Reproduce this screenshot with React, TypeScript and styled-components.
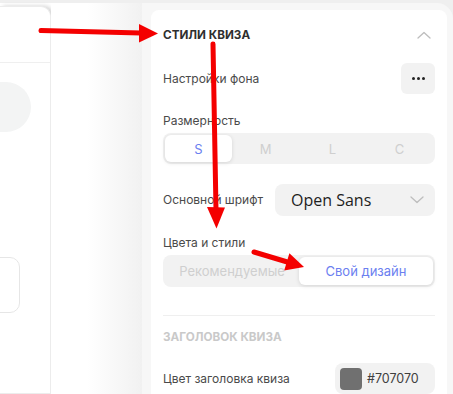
import styled, { createGlobalStyle } from 'styled-components';

const GlobalStyle = createGlobalStyle`
  html, body {
    margin: 0;
    padding: 0;
    background: #efefef;
    overflow: hidden;
  }
  body {
    font-family: 'Inter', 'Noto Sans', sans-serif;
    -webkit-font-smoothing: antialiased;
  }
  * { box-sizing: border-box; }
`;

const COLORS = {
  label: '#4a4a4a',
  heading: '#2f2f2f',
  muted: '#c9c9c9',
  field: '#f2f2f2',
  accent: '#6b80f0',
  panel: '#f7f7f7',
};

const Page = styled.div`
  position: relative;
  width: 453px;
  height: 394px;
  padding-top: 3px;
  display: flex;
  flex-direction: column;
`;

const Workspace = styled.div`
  flex: 1;
  display: flex;
  min-height: 0;
`;

const PreviewColumn = styled.div`
  width: 51px;
  background: #fff;
  padding-top: 3px;
  display: flex;
`;

const PreviewCard = styled.div`
  flex: 1;
  background: #fff;
  border: 1px solid #ececec;
  border-left: none;
  border-top-right-radius: 10px;
  box-shadow: 3px 0 4px rgba(0, 0, 0, 0.18);
  overflow: hidden;
  display: flex;
  flex-direction: column;
`;

const PreviewHeader = styled.div`
  height: 56px;
  border-bottom: 1px solid #efefef;
  flex-shrink: 0;
`;

const Avatar = styled.div`
  width: 60px;
  height: 50px;
  margin: 19px 0 0 -29px;
  border-radius: 25px;
  background: #f3f4f4;
`;

const GhostBox = styled.div`
  width: 40px;
  height: 56px;
  margin: 125px 0 0 -20px;
  border: 1px solid #e6e6e6;
  border-radius: 10px;
`;

const Gutter = styled.div`
  flex: 1;
  background: linear-gradient(to right, #fff 0%, #fff 40%, #f1f1f1 100%);
`;

const SettingsPanel = styled.div`
  width: 311px;
  background: ${COLORS.panel};
  border-top-right-radius: 16px;
  padding: 7px 6px 0 9px;
  display: flex;
`;

const SettingsCard = styled.div`
  flex: 1;
  background: #fff;
  border-radius: 8px 8px 0 0;
  padding: 0 12px;
  display: flex;
  flex-direction: column;
`;

const SectionHeader = styled.div`
  height: 48px;
  display: flex;
  align-items: center;
  justify-content: space-between;
  padding: 1px 4px 0 0;
`;

const SectionTitle = styled.div<{ muted?: boolean }>`
  font-size: 11.7px;
  font-weight: 700;
  color: ${({ muted }) => (muted ? COLORS.muted : COLORS.heading)};
`;

const Row = styled.div<{ top: number }>`
  margin-top: ${({ top }) => top}px;
  display: flex;
  align-items: center;
  justify-content: space-between;
`;

const Label = styled.div<{ top?: number }>`
  margin-top: ${({ top }) => top ?? 0}px;
  font-size: 12px;
  line-height: 16px;
  color: ${COLORS.label};
`;

const IconButton = styled.div`
  width: 34px;
  height: 31px;
  border-radius: 6px;
  background: ${COLORS.field};
  display: flex;
  align-items: center;
  justify-content: center;
  gap: 2px;
`;

const Dot = styled.span`
  width: 3px;
  height: 3px;
  border-radius: 50%;
  background: #222;
`;

const Segmented = styled.div<{ top: number; height: number }>`
  margin-top: ${({ top }) => top}px;
  height: ${({ height }) => height}px;
  padding: 2px;
  border-radius: 8px;
  background: ${COLORS.field};
  display: flex;
`;

const Segment = styled.div<{ active?: boolean; size: number }>`
  flex: 1;
  display: flex;
  align-items: center;
  justify-content: center;
  border-radius: 6px;
  font-size: ${({ size }) => size}px;
  color: ${({ active }) => (active ? COLORS.accent : '#cfcfcf')};
  background: ${({ active }) => (active ? '#fff' : 'transparent')};
  box-shadow: ${({ active }) => (active ? '0 1px 4px rgba(0,0,0,0.12)' : 'none')};
`;

const Select = styled.div`
  width: 160px;
  height: 32px;
  border-radius: 8px;
  background: ${COLORS.field};
  padding: 0 11px 0 16px;
  display: flex;
  align-items: center;
  justify-content: space-between;
  font-family: 'Open Sans', sans-serif;
  font-size: 16px;
  color: #1e1e1e;
`;

const Divider = styled.div`
  margin-top: 28px;
  height: 1px;
  background: #efefef;
`;

const SubHeader = styled.div`
  margin-top: 13px;
  height: 16px;
  display: flex;
  align-items: center;
`;

const ColorChip = styled.div`
  width: 100px;
  height: 31px;
  border-radius: 8px;
  background: ${COLORS.field};
  padding: 0 5px;
  display: flex;
  align-items: center;
  gap: 5px;
  font-size: 12.5px;
  color: #404040;
`;

const Swatch = styled.div<{ color: string }>`
  width: 22px;
  height: 22px;
  border-radius: 4px;
  background: ${({ color }) => color};
`;

const Overlay = styled.svg`
  position: absolute;
  left: 0;
  top: 0;
  pointer-events: none;
`;

const Chevron = ({ up }: { up?: boolean }) => (
  <svg width="14" height="8" viewBox="0 0 14 8" fill="none">
    <path
      d={up ? 'M1 7 L7 1.5 L13 7' : 'M1 1 L7 6.5 L13 1'}
      stroke="#bdbdbd"
      strokeWidth="1.3"
      strokeLinecap="round"
      strokeLinejoin="round"
    />
  </svg>
);

const Arrows = () => (
  <Overlay width="453" height="394" viewBox="0 0 453 394">
    <g fill="#f40000" stroke="#f40000">
      <line x1="41" y1="30.5" x2="141" y2="33" strokeWidth="5" strokeLinecap="round" />
      <polygon points="139,24 158,33.5 139,42.5" stroke="none" />
      <line x1="213" y1="44" x2="216" y2="210" strokeWidth="5" strokeLinecap="round" />
      <polygon points="207,207 225,207.5 216.5,228.5" stroke="none" />
      <line x1="254" y1="252" x2="289" y2="262.5" strokeWidth="5" strokeLinecap="round" />
      <polygon points="289.4,253.2 304,267 284.2,270.4" stroke="none" />
    </g>
  </Overlay>
);

const sizes = ['S', 'M', 'L', 'C'];

export default function App() {
  return (
    <>
      <GlobalStyle />
      <Page>
        <Workspace>
          <PreviewColumn>
            <PreviewCard>
              <PreviewHeader />
              <Avatar />
              <GhostBox />
            </PreviewCard>
          </PreviewColumn>
          <Gutter />
          <SettingsPanel>
            <SettingsCard>
              <SectionHeader>
                <SectionTitle>СТИЛИ КВИЗА</SectionTitle>
                <Chevron up />
              </SectionHeader>

              <Row top={5}>
                <Label>Настройки фона</Label>
                <IconButton>
                  <Dot />
                  <Dot />
                  <Dot />
                </IconButton>
              </Row>

              <Label top={19}>Размерность</Label>
              <Segmented top={4} height={31}>
                {sizes.map((s, i) => (
                  <Segment key={s} size={13} active={i === 0}>
                    {s}
                  </Segment>
                ))}
              </Segmented>

              <Row top={20}>
                <Label>Основной шрифт</Label>
                <Select>
                  Open Sans
                  <Chevron />
                </Select>
              </Row>

              <Label top={19}>Цвета и стили</Label>
              <Segmented top={4} height={32}>
                <Segment size={13}>Рекомендуемые</Segment>
                <Segment size={13} active>
                  Свой дизайн
                </Segment>
              </Segmented>

              <Divider />

              <SubHeader>
                <SectionTitle muted>ЗАГОЛОВОК КВИЗА</SectionTitle>
              </SubHeader>

              <Row top={18}>
                <Label>Цвет заголовка квиза</Label>
                <ColorChip>
                  <Swatch color="#707070" />
                  #707070
                </ColorChip>
              </Row>
            </SettingsCard>
          </SettingsPanel>
        </Workspace>
        <Arrows />
      </Page>
    </>
  );
}
